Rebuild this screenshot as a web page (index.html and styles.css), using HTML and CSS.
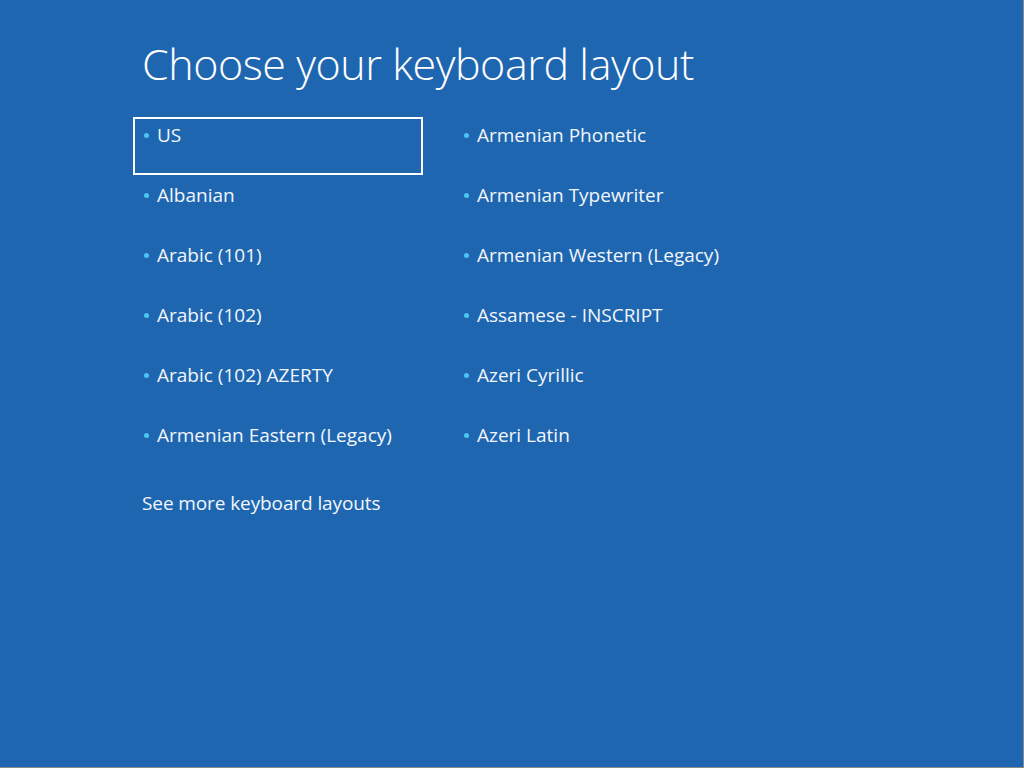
FILE: index.html
```html
<!DOCTYPE html>
<html>
<head>
<meta charset="utf-8">
<link rel="stylesheet" href="styles.css">
</head>
<body>
<div class="screen">
  <h1 class="title">Choose your keyboard layout</h1>
  <div class="grid">
    <div class="col">
      <div class="item selected"><span class="dot"></span><span class="label">US</span></div>
      <div class="item"><span class="dot"></span><span class="label">Albanian</span></div>
      <div class="item"><span class="dot"></span><span class="label">Arabic (101)</span></div>
      <div class="item"><span class="dot"></span><span class="label">Arabic (102)</span></div>
      <div class="item"><span class="dot"></span><span class="label">Arabic (102) AZERTY</span></div>
      <div class="item"><span class="dot"></span><span class="label">Armenian Eastern (Legacy)</span></div>
    </div>
    <div class="col">
      <div class="item"><span class="dot"></span><span class="label">Armenian Phonetic</span></div>
      <div class="item"><span class="dot"></span><span class="label">Armenian Typewriter</span></div>
      <div class="item"><span class="dot"></span><span class="label">Armenian Western (Legacy)</span></div>
      <div class="item"><span class="dot"></span><span class="label">Assamese - INSCRIPT</span></div>
      <div class="item"><span class="dot"></span><span class="label">Azeri Cyrillic</span></div>
      <div class="item"><span class="dot"></span><span class="label">Azeri Latin</span></div>
    </div>
  </div>
  <div class="more">See more keyboard layouts</div>
</div>
</body>
</html>
```
FILE: styles.css
```css
html, body {
  margin: 0;
  padding: 0;
  background: #1f66b1;
}
.screen {
  box-sizing: border-box;
  width: 1024px;
  height: 768px;
  background: #1f66b1;
  border-right: 1px solid #8a8a8a;
  border-bottom: 1px solid #8a8a8a;
  padding: 0 0 0 133px;
  color: #ffffff;
  font-family: "Open Sans", "Noto Sans", sans-serif;
}
.title {
  margin: 0;
  padding: 34px 0 0 9px;
  font-weight: 300;
  font-size: 43px;
  line-height: 60px;
  height: 83px;
  letter-spacing: -0.45px;
}
.grid {
  display: flex;
  gap: 30px;
}
.col {
  display: flex;
  flex-direction: column;
  gap: 2px;
  width: 290px;
}
.item {
  box-sizing: border-box;
  height: 58px;
  border: 2px solid transparent;
  display: flex;
  align-items: flex-start;
  padding: 3px 0 0 8px;
  font-size: 19px;
  line-height: 26px;
  color: #f2f6fb;
}
.item.selected {
  border-color: #ffffff;
}
.dot {
  width: 5px;
  height: 5px;
  border-radius: 50%;
  background: #4fc3f2;
  margin: 11px 8px 0 1px;
  flex: none;
}
.more {
  padding: 15px 0 0 9px;
  font-size: 19px;
  line-height: 26px;
  letter-spacing: -0.1px;
  color: #f2f6fb;
}
```
